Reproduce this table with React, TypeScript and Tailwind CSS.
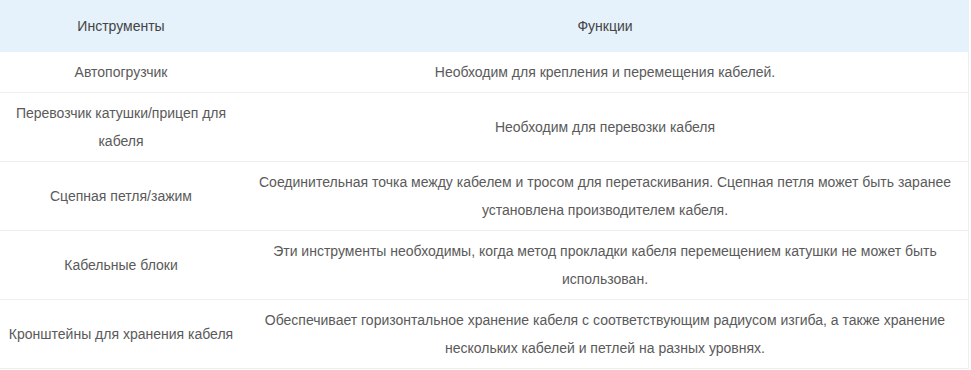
const rows = [
  {
    tool: "Автопогрузчик",
    func: "Необходим для крепления и перемещения кабелей.",
  },
  {
    tool: "Перевозчик катушки/прицеп для кабеля",
    func: "Необходим для перевозки кабеля",
  },
  {
    tool: "Сцепная петля/зажим",
    func: "Соединительная точка между кабелем и тросом для перетаскивания. Сцепная петля может быть заранее установлена производителем кабеля.",
  },
  {
    tool: "Кабельные блоки",
    func: "Эти инструменты необходимы, когда метод прокладки кабеля перемещением катушки не может быть использован.",
  },
  {
    tool: "Кронштейны для хранения кабеля",
    func: "Обеспечивает горизонтальное хранение кабеля с соответствующим радиусом изгиба, а также хранение нескольких кабелей и петлей на разных уровнях.",
  },
];

export default function App() {
  return (
    <div className="min-h-screen bg-white font-['Liberation_Sans',Arial,sans-serif] text-[14px]">
      <div className="w-[969px] border-r border-[#eeeeee]">
        <table className="w-full table-fixed border-collapse">
          <colgroup>
            <col className="w-[242px]" />
            <col />
          </colgroup>
          <thead>
            <tr className="bg-[#e5f2fb] text-[#444444]">
              <th className="px-2 py-3 text-center font-normal leading-[28px]">Инструменты</th>
              <th className="px-2 py-3 text-center font-normal leading-[28px]">Функции</th>
            </tr>
          </thead>
          <tbody className="text-[#5a5a5a]">
            {rows.map((r) => (
              <tr key={r.tool} className="border-b border-[#eeeeee]">
                <td className="px-2 py-1.5 text-center leading-[28px]">{r.tool}</td>
                <td className="px-2 py-1.5 text-center leading-[28px]">{r.func}</td>
              </tr>
            ))}
          </tbody>
        </table>
      </div>
    </div>
  );
}
